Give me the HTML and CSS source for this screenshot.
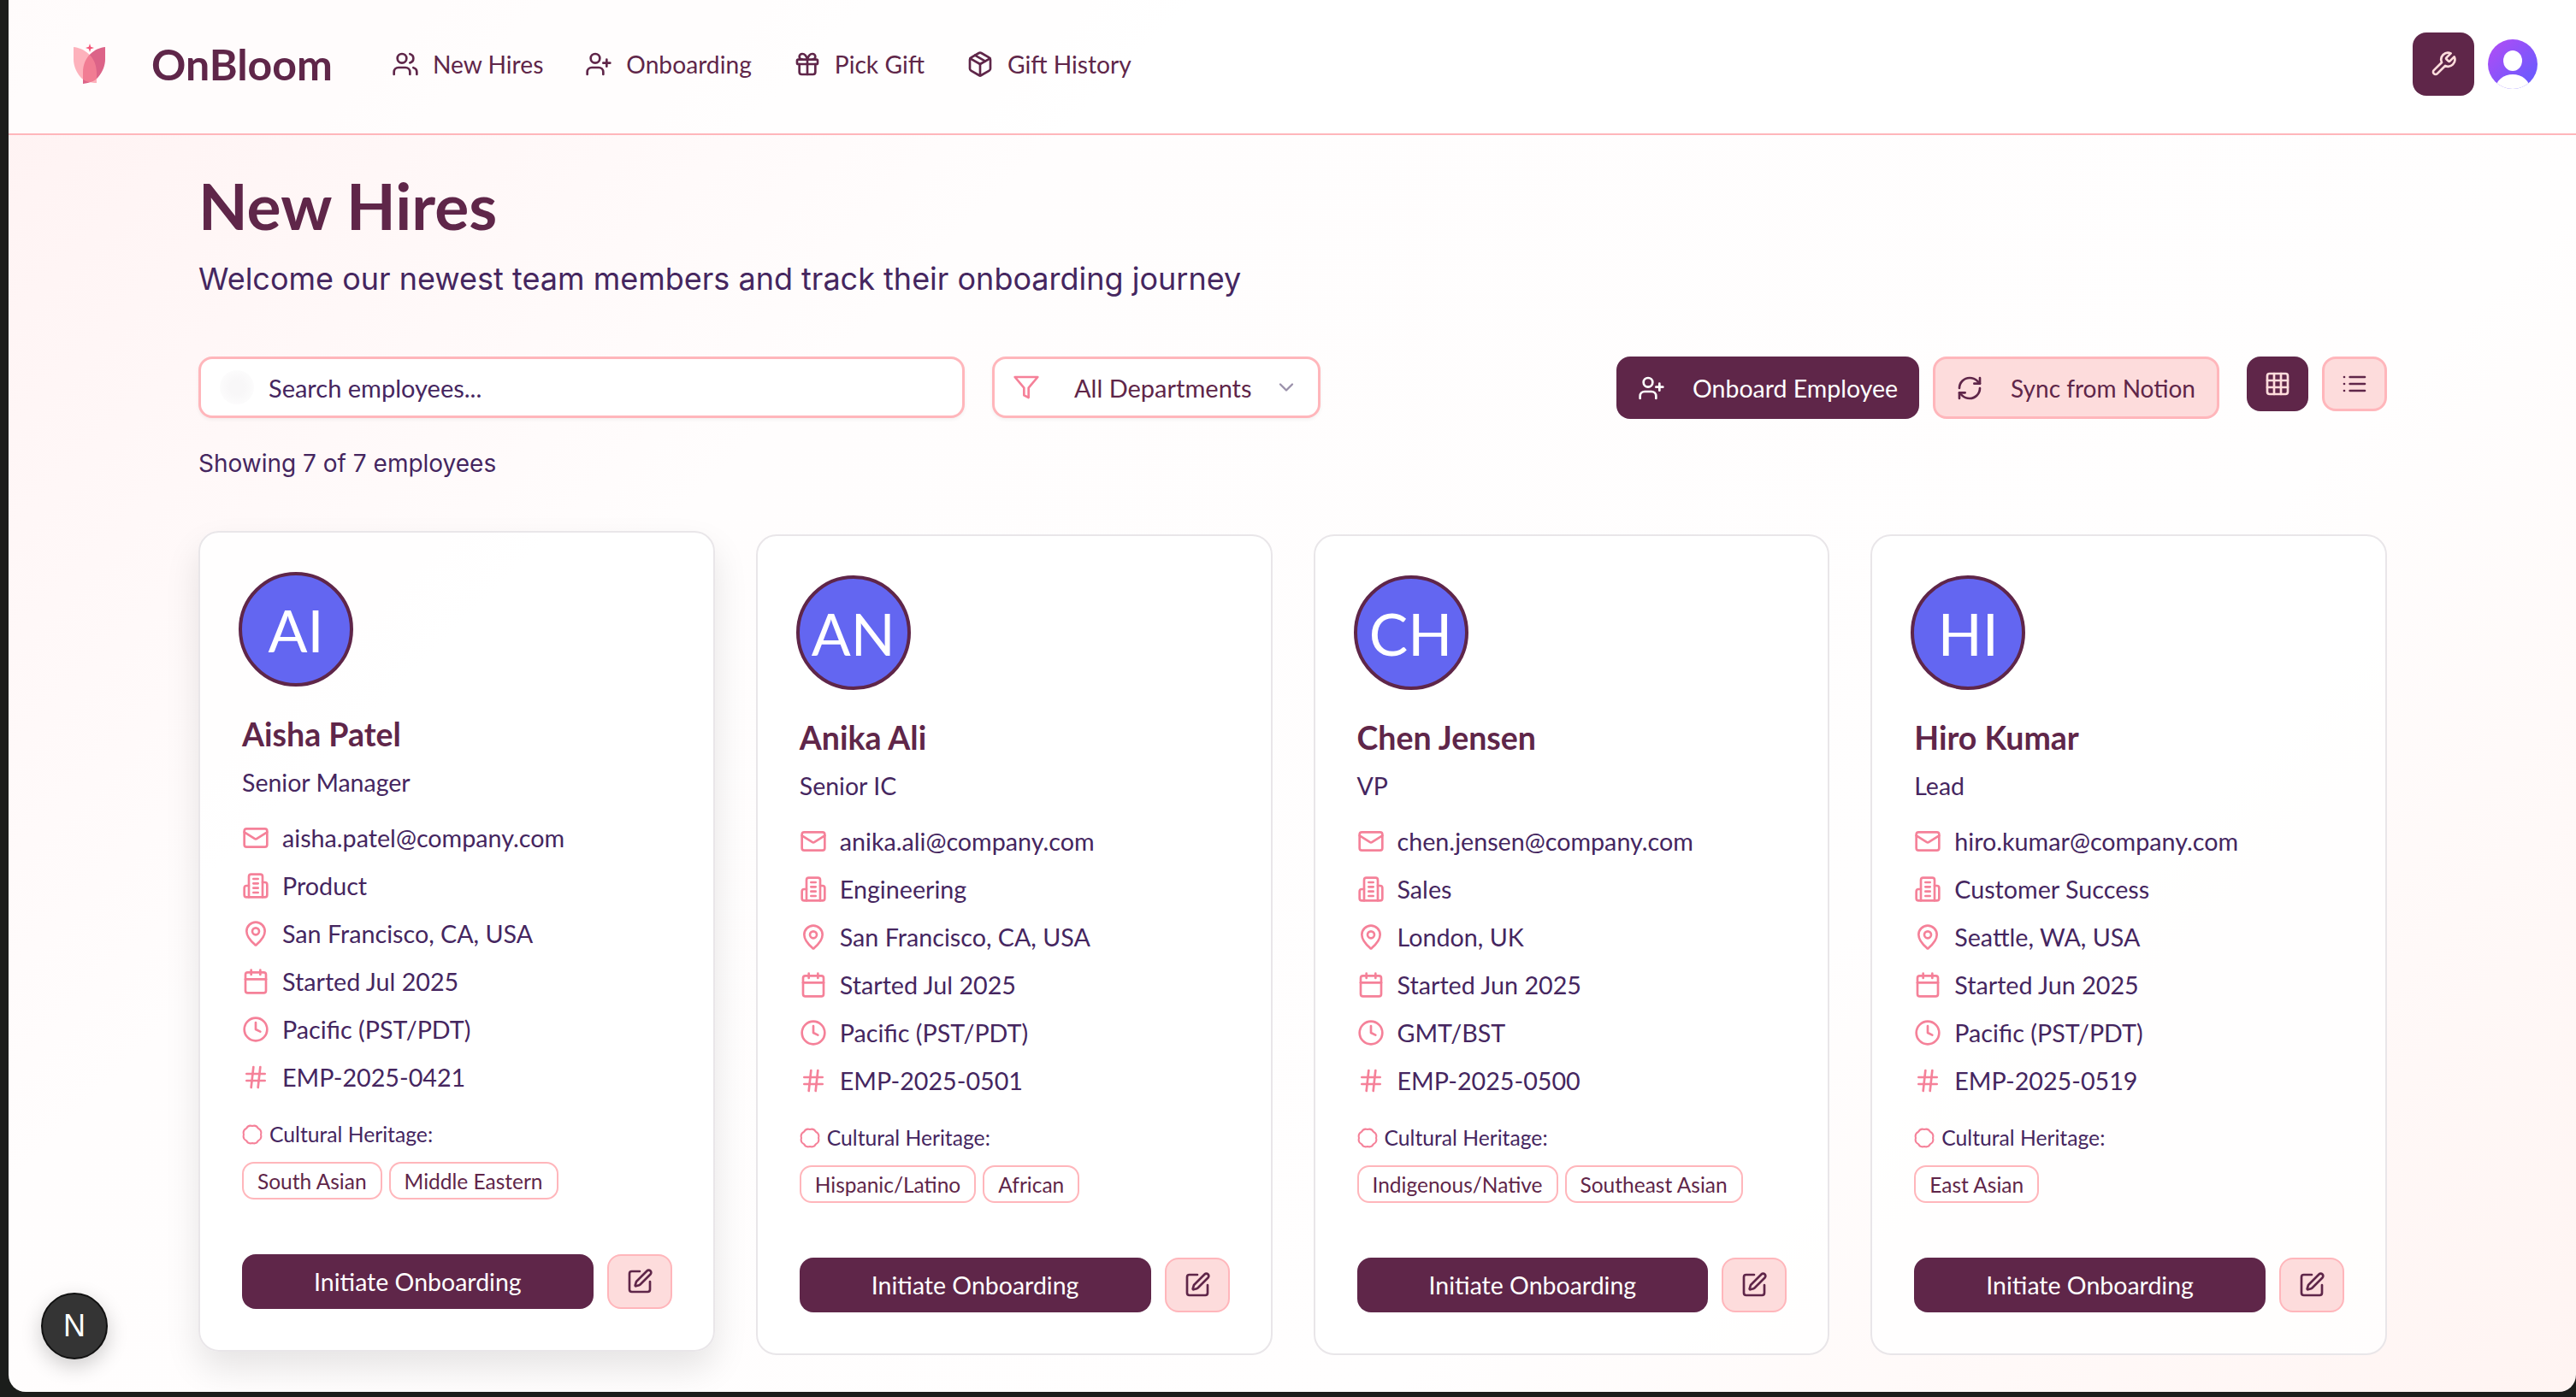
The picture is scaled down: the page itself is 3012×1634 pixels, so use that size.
FILE: index.html
```html
<!DOCTYPE html>
<html lang="en">
<head>
  <meta charset="UTF-8">
  <meta name="viewport" content="width=device-width, initial-scale=1.0">
  <title>OnBloom - New Hires</title>
  <link rel="stylesheet" href="styles.css">
</head>
<body>
  <!-- icon sprite -->
  <svg class="sprite" xmlns="http://www.w3.org/2000/svg">
    <symbol id="i-users" viewBox="0 0 24 24"><path d="M16 21v-2a4 4 0 0 0-4-4H6a4 4 0 0 0-4 4v2"/><path d="M16 3.128a4 4 0 0 1 0 7.744"/><path d="M22 21v-2a4 4 0 0 0-3-3.87"/><circle cx="9" cy="7" r="4"/></symbol>
    <symbol id="i-user-plus" viewBox="0 0 24 24"><path d="M16 21v-2a4 4 0 0 0-4-4H6a4 4 0 0 0-4 4v2"/><circle cx="9" cy="7" r="4"/><path d="M19 8v6"/><path d="M22 11h-6"/></symbol>
    <symbol id="i-gift" viewBox="0 0 24 24"><rect x="3" y="8" width="18" height="4" rx="1"/><path d="M12 8v13"/><path d="M19 12v7a2 2 0 0 1-2 2H7a2 2 0 0 1-2-2v-7"/><path d="M7.5 8a2.5 2.5 0 0 1 0-5A4.8 8 0 0 1 12 8a4.8 8 0 0 1 4.5-5 2.5 2.5 0 0 1 0 5"/></symbol>
    <symbol id="i-package" viewBox="0 0 24 24"><path d="M11 21.73a2 2 0 0 0 2 0l7-4A2 2 0 0 0 21 16V8a2 2 0 0 0-1-1.73l-7-4a2 2 0 0 0-2 0l-7 4A2 2 0 0 0 3 8v8a2 2 0 0 0 1 1.73z"/><path d="M12 22V12"/><path d="M3.29 7 12 12l8.71-5"/><path d="m7.5 4.27 9 5.15"/></symbol>
    <symbol id="i-wrench" viewBox="0 0 24 24"><path d="M14.7 6.3a1 1 0 0 0 0 1.4l1.6 1.6a1 1 0 0 0 1.4 0l3.77-3.77a6 6 0 0 1-7.94 7.94l-6.91 6.91a2.12 2.12 0 0 1-3-3l6.91-6.91a6 6 0 0 1 7.94-7.94l-3.76 3.76z"/></symbol>
    <symbol id="i-filter" viewBox="0 0 24 24"><polygon points="22 3 2 3 10 12.46 10 19 14 21 14 12.46 22 3"/></symbol>
    <symbol id="i-chevron" viewBox="0 0 24 24"><path d="m6 9 6 6 6-6"/></symbol>
    <symbol id="i-refresh" viewBox="0 0 24 24"><path d="M3 12a9 9 0 0 1 9-9 9.75 9.75 0 0 1 6.74 2.74L21 8"/><path d="M21 3v5h-5"/><path d="M21 12a9 9 0 0 1-9 9 9.75 9.75 0 0 1-6.74-2.74L3 16"/><path d="M8 16H3v5"/></symbol>
    <symbol id="i-grid" viewBox="0 0 24 24"><rect width="18" height="18" x="3" y="3" rx="2"/><path d="M3 9h18"/><path d="M3 15h18"/><path d="M9 3v18"/><path d="M15 3v18"/></symbol>
    <symbol id="i-list" viewBox="0 0 24 24"><path d="M3 12h.01"/><path d="M3 18h.01"/><path d="M3 6h.01"/><path d="M8 12h13"/><path d="M8 18h13"/><path d="M8 6h13"/></symbol>
    <symbol id="i-mail" viewBox="0 0 24 24"><rect width="20" height="16" x="2" y="4" rx="2"/><path d="m22 7-8.97 5.7a1.94 1.94 0 0 1-2.06 0L2 7"/></symbol>
    <symbol id="i-building" viewBox="0 0 24 24"><path d="M6 22V4a2 2 0 0 1 2-2h8a2 2 0 0 1 2 2v18Z"/><path d="M6 12H4a2 2 0 0 0-2 2v6a2 2 0 0 0 2 2h2"/><path d="M18 9h2a2 2 0 0 1 2 2v9a2 2 0 0 1-2 2h-2"/><path d="M10 6h4"/><path d="M10 10h4"/><path d="M10 14h4"/><path d="M10 18h4"/></symbol>
    <symbol id="i-pin" viewBox="0 0 24 24"><path d="M20 10c0 4.993-5.539 10.193-7.399 11.799a1 1 0 0 1-1.202 0C9.539 20.193 4 14.993 4 10a8 8 0 0 1 16 0"/><circle cx="12" cy="10" r="3"/></symbol>
    <symbol id="i-calendar" viewBox="0 0 24 24"><path d="M8 2v4"/><path d="M16 2v4"/><rect width="18" height="18" x="3" y="4" rx="2"/><path d="M3 10h18"/></symbol>
    <symbol id="i-clock" viewBox="0 0 24 24"><circle cx="12" cy="12" r="10"/><polyline points="12 6 12 12 16 14"/></symbol>
    <symbol id="i-hash" viewBox="0 0 24 24"><path d="M4 9h16"/><path d="M4 15h16"/><path d="M10 3 8 21"/><path d="M16 3l-2 18"/></symbol>
    <symbol id="i-scallop" viewBox="0 0 24 24"><path d="M22 12A6 6 0 0 1 19.07 19.07A6 6 0 0 1 12 22A6 6 0 0 1 4.93 19.07A6 6 0 0 1 2 12A6 6 0 0 1 4.93 4.93A6 6 0 0 1 12 2A6 6 0 0 1 19.07 4.93A6 6 0 0 1 22 12Z"/></symbol>
    <symbol id="i-edit" viewBox="0 0 24 24"><path d="M12 3H5a2 2 0 0 0-2 2v14a2 2 0 0 0 2 2h14a2 2 0 0 0 2-2v-7"/><path d="M18.375 2.625a1 1 0 0 1 3 3l-9.013 9.014a2 2 0 0 1-.853.505l-2.873.84a.5.5 0 0 1-.62-.62l.84-2.873a2 2 0 0 1 .506-.852z"/></symbol>
  </svg>

  <div class="app">
    <header class="topbar">
      <div class="brand">
        <svg class="logo" viewBox="0 0 39 48" xmlns="http://www.w3.org/2000/svg">
          <path d="M38 4C27 5 12 14 12 34V47C20 46 26 44 30 39C35 33 38 26 38 18Z" fill="#dc6388"/>
          <path d="M1 4C12 5 28 14 28 34V46C20 46 13 44 9 39C4 33 1 26 1 18Z" fill="#fc8a9a" fill-opacity=".65"/>
          <path d="M20 0l1.2 3.8 3.8 1.2-3.8 1.2L20 10l-1.2-3.8L15 5l3.8-1.2z" fill="#f4577a"/>
        </svg>
        <span class="brand-name">OnBloom</span>
      </div>
      <nav class="nav">
        <a class="nav-link"><svg class="icon"><use href="#i-users"/></svg>New Hires</a>
        <a class="nav-link"><svg class="icon"><use href="#i-user-plus"/></svg>Onboarding</a>
        <a class="nav-link"><svg class="icon"><use href="#i-gift"/></svg>Pick Gift</a>
        <a class="nav-link"><svg class="icon"><use href="#i-package"/></svg>Gift History</a>
      </nav>
      <div class="topbar-right">
        <button class="btn-tools"><svg class="icon"><use href="#i-wrench"/></svg></button>
        <div class="user-avatar"><span class="user-head"></span><span class="user-body"></span></div>
      </div>
    </header>

    <main class="content">
      <h1>New Hires</h1>
      <p class="lead">Welcome our newest team members and track their onboarding journey</p>

      <div class="toolbar">
        <div class="search"><span class="search-icon"></span><span class="placeholder">Search employees...</span></div>
        <div class="select">
          <svg class="icon icon-pink"><use href="#i-filter"/></svg>
          <span>All Departments</span>
          <svg class="icon chevron"><use href="#i-chevron"/></svg>
        </div>
        <div class="toolbar-actions">
          <button class="btn btn-dark"><svg class="icon"><use href="#i-user-plus"/></svg>Onboard Employee</button>
          <button class="btn btn-light"><svg class="icon"><use href="#i-refresh"/></svg>Sync from Notion</button>
          <div class="view-toggle">
            <button class="btn-view active"><svg class="icon"><use href="#i-grid"/></svg></button>
            <button class="btn-view"><svg class="icon"><use href="#i-list"/></svg></button>
          </div>
        </div>
      </div>

      <p class="count">Showing 7 of 7 employees</p>

      <div class="cards">
        <article class="card card-hover">
          <div class="avatar">AI</div>
          <h3>Aisha Patel</h3>
          <p class="role">Senior Manager</p>
          <ul class="facts">
            <li><svg class="icon"><use href="#i-mail"/></svg>aisha.patel@company.com</li>
            <li><svg class="icon"><use href="#i-building"/></svg>Product</li>
            <li><svg class="icon"><use href="#i-pin"/></svg>San Francisco, CA, USA</li>
            <li><svg class="icon"><use href="#i-calendar"/></svg>Started Jul 2025</li>
            <li><svg class="icon"><use href="#i-clock"/></svg>Pacific (PST/PDT)</li>
            <li><svg class="icon"><use href="#i-hash"/></svg>EMP-2025-0421</li>
          </ul>
          <div class="heritage"><svg class="icon"><use href="#i-scallop"/></svg>Cultural Heritage:</div>
          <div class="tags"><span class="tag">South Asian</span><span class="tag">Middle Eastern</span></div>
          <div class="card-actions">
            <button class="btn-initiate">Initiate Onboarding</button>
            <button class="btn-edit"><svg class="icon"><use href="#i-edit"/></svg></button>
          </div>
        </article>

        <article class="card">
          <div class="avatar">AN</div>
          <h3>Anika Ali</h3>
          <p class="role">Senior IC</p>
          <ul class="facts">
            <li><svg class="icon"><use href="#i-mail"/></svg>anika.ali@company.com</li>
            <li><svg class="icon"><use href="#i-building"/></svg>Engineering</li>
            <li><svg class="icon"><use href="#i-pin"/></svg>San Francisco, CA, USA</li>
            <li><svg class="icon"><use href="#i-calendar"/></svg>Started Jul 2025</li>
            <li><svg class="icon"><use href="#i-clock"/></svg>Pacific (PST/PDT)</li>
            <li><svg class="icon"><use href="#i-hash"/></svg>EMP-2025-0501</li>
          </ul>
          <div class="heritage"><svg class="icon"><use href="#i-scallop"/></svg>Cultural Heritage:</div>
          <div class="tags"><span class="tag">Hispanic/Latino</span><span class="tag">African</span></div>
          <div class="card-actions">
            <button class="btn-initiate">Initiate Onboarding</button>
            <button class="btn-edit"><svg class="icon"><use href="#i-edit"/></svg></button>
          </div>
        </article>

        <article class="card">
          <div class="avatar">CH</div>
          <h3>Chen Jensen</h3>
          <p class="role">VP</p>
          <ul class="facts">
            <li><svg class="icon"><use href="#i-mail"/></svg>chen.jensen@company.com</li>
            <li><svg class="icon"><use href="#i-building"/></svg>Sales</li>
            <li><svg class="icon"><use href="#i-pin"/></svg>London, UK</li>
            <li><svg class="icon"><use href="#i-calendar"/></svg>Started Jun 2025</li>
            <li><svg class="icon"><use href="#i-clock"/></svg>GMT/BST</li>
            <li><svg class="icon"><use href="#i-hash"/></svg>EMP-2025-0500</li>
          </ul>
          <div class="heritage"><svg class="icon"><use href="#i-scallop"/></svg>Cultural Heritage:</div>
          <div class="tags"><span class="tag">Indigenous/Native</span><span class="tag">Southeast Asian</span></div>
          <div class="card-actions">
            <button class="btn-initiate">Initiate Onboarding</button>
            <button class="btn-edit"><svg class="icon"><use href="#i-edit"/></svg></button>
          </div>
        </article>

        <article class="card">
          <div class="avatar">HI</div>
          <h3>Hiro Kumar</h3>
          <p class="role">Lead</p>
          <ul class="facts">
            <li><svg class="icon"><use href="#i-mail"/></svg>hiro.kumar@company.com</li>
            <li><svg class="icon"><use href="#i-building"/></svg>Customer Success</li>
            <li><svg class="icon"><use href="#i-pin"/></svg>Seattle, WA, USA</li>
            <li><svg class="icon"><use href="#i-calendar"/></svg>Started Jun 2025</li>
            <li><svg class="icon"><use href="#i-clock"/></svg>Pacific (PST/PDT)</li>
            <li><svg class="icon"><use href="#i-hash"/></svg>EMP-2025-0519</li>
          </ul>
          <div class="heritage"><svg class="icon"><use href="#i-scallop"/></svg>Cultural Heritage:</div>
          <div class="tags"><span class="tag">East Asian</span></div>
          <div class="card-actions">
            <button class="btn-initiate">Initiate Onboarding</button>
            <button class="btn-edit"><svg class="icon"><use href="#i-edit"/></svg></button>
          </div>
        </article>
      </div>
    </main>

    <div class="dev-badge">N</div>
  </div>
</body>
</html>
```

FILE: styles.css
```css
* {
  margin: 0;
  padding: 0;
  box-sizing: border-box;
}

html, body {
  height: 100%;
  overflow: hidden;
}

body {
  font-family: 'Lato', 'Noto Sans', sans-serif;
  background-color: #1b1d1b;
  color: #5f2649;
  padding: 0 0 6px 10px;
}

.sprite {
  display: none;
}

.icon {
  width: 32px;
  height: 32px;
  fill: none;
  stroke: currentColor;
  stroke-width: 2;
  stroke-linecap: round;
  stroke-linejoin: round;
  flex-shrink: 0;
}

button {
  font-family: inherit;
  border: none;
}

.app {
  position: relative;
  height: 100%;
  overflow: hidden;
  border-bottom-left-radius: 20px;
  border-bottom-right-radius: 20px;
  background: linear-gradient(135deg, #fff2f2 0%, #fffdfd 30%, #fffefe 70%, #fff4f2 100%);
}

/* top bar */
.topbar {
  height: 158px;
  display: flex;
  align-items: center;
  padding: 0 45px 7px 75px;
  background-color: rgba(255, 255, 255, 0.7);
  border-bottom: 2px solid #ffb6bb;
}

.brand {
  display: flex;
  align-items: center;
  gap: 53px;
}

.logo {
  width: 39px;
  height: 48px;
}

.brand-name {
  font-size: 50px;
  font-weight: 700;
  color: #5f2649;
}

.nav {
  display: flex;
  gap: 49px;
  margin-left: 69px;
}

.nav-link {
  display: flex;
  align-items: center;
  gap: 16px;
  font-size: 28.2px;
  color: #5f2649;
}

.topbar-right {
  margin-left: auto;
  display: flex;
  align-items: center;
  gap: 16px;
}

.btn-tools {
  width: 72px;
  height: 74px;
  border-radius: 16px;
  background-color: #5f2649;
  color: #ffdcdc;
  display: flex;
  align-items: center;
  justify-content: center;
}

.user-avatar {
  position: relative;
  width: 58px;
  height: 58px;
  border-radius: 50%;
  overflow: hidden;
  background: linear-gradient(135deg, #b44cf5, #5f5cff);
}

.user-head {
  position: absolute;
  left: 18px;
  top: 13px;
  width: 22px;
  height: 24px;
  border-radius: 50%;
  background-color: #fff;
}

.user-body {
  position: absolute;
  left: 9px;
  top: 41px;
  width: 40px;
  height: 34px;
  border-radius: 50%;
  background-color: #fff;
}

/* page */
.content {
  padding: 40px 221px 0 222px;
}

h1 {
  font-size: 75px;
  font-weight: 700;
  line-height: 84px;
  color: #5f2649;
}

.lead {
  font-family: 'Inter', sans-serif;
  font-size: 36px;
  line-height: 48px;
  margin-top: 20px;
  color: #45265f;
}

.toolbar {
  display: flex;
  align-items: flex-start;
  margin-top: 67px;
}

.search,
.select {
  height: 72px;
  border: 3px solid #ffb6bb;
  border-radius: 16px;
  background-color: #fff;
  display: flex;
  align-items: center;
  font-size: 29px;
  box-shadow: 0 2px 4px rgba(0, 0, 0, 0.05);
}

.search {
  width: 896px;
  padding-left: 22px;
  gap: 17px;
  color: #45265f;
}

.search-icon {
  width: 40px;
  height: 40px;
  border-radius: 50%;
  background: radial-gradient(circle, #f8f7f8 30%, #fff 100%);
}

.select {
  width: 384px;
  margin-left: 32px;
  padding-left: 21px;
  gap: 40px;
}

.icon-pink {
  color: #f58199;
}

.chevron {
  color: #9a90aa;
  width: 28px;
  height: 28px;
  margin-left: -14px;
}

.toolbar-actions {
  margin-left: auto;
  display: flex;
  align-items: flex-start;
  gap: 16px;
}

.btn {
  height: 73px;
  display: flex;
  align-items: center;
  gap: 32px;
  padding: 0 25px;
  border-radius: 16px;
  font-size: 28.5px;
}

.btn-dark {
  background-color: #5f2649;
  color: #fff;
}

.btn-light {
  background-color: #fddcdc;
  color: #5f2649;
  border: 3px solid #ffb6bb;
  font-size: 28px;
  padding: 0 25px 0 24px;
}

.view-toggle {
  display: flex;
  gap: 16px;
  margin-left: 16px;
}

.btn-view {
  width: 76px;
  height: 64px;
  border-radius: 16px;
  background-color: #fddcdc;
  color: #5f2649;
  border: 3px solid #ffb6bb;
  display: flex;
  align-items: center;
  justify-content: center;
}

.btn-view.active {
  width: 72px;
  background-color: #5f2649;
  color: #ffdcdc;
  border: none;
}

.count {
  font-family: 'Inter', sans-serif;
  font-size: 28px;
  line-height: 40px;
  margin-top: 32px;
  color: #45265f;
}

/* employee cards */
.cards {
  display: grid;
  grid-template-columns: repeat(4, 1fr);
  gap: 48px;
  margin-top: 63px;
}

.card {
  height: 960px;
  padding: 46px 48px 48px 49px;
  display: flex;
  flex-direction: column;
  background-color: rgba(255, 255, 255, 0.8);
  border: 2px solid #e9e6e9;
  border-radius: 24px;
}

.card-hover {
  transform: translateY(-4px);
  box-shadow: 0 20px 40px rgba(0, 0, 0, 0.1);
}

.avatar {
  width: 134px;
  height: 134px;
  margin-left: -4px;
  border-radius: 50%;
  border: 4px solid #5f2649;
  background-color: #6366f1;
  color: #fff;
  font-size: 68px;
  display: flex;
  align-items: center;
  justify-content: center;
}

h3 {
  font-size: 37.5px;
  font-weight: 700;
  line-height: 48px;
  margin-top: 32px;
  color: #5f2649;
}

.role {
  font-size: 28.5px;
  line-height: 40px;
  margin-top: 12px;
  color: #45265f;
}

.facts {
  list-style: none;
  margin-top: 17px;
}

.facts li {
  height: 56px;
  display: flex;
  align-items: center;
  gap: 15px;
  font-size: 28.7px;
  color: #45265f;
}

.facts .icon {
  color: #f58199;
}

.heritage {
  display: flex;
  align-items: center;
  gap: 8px;
  margin-top: 21px;
  font-size: 24.7px;
  line-height: 36px;
  color: #45265f;
}

.heritage .icon {
  width: 24px;
  height: 24px;
  color: #f58199;
}

.tags {
  display: flex;
  gap: 8px;
  margin-top: 14px;
}

.tag {
  height: 44px;
  padding: 0 16px;
  display: flex;
  align-items: center;
  font-size: 24.5px;
  color: #5f2649;
  background-color: #fff;
  border: 2px solid #ffb6bb;
  border-radius: 14px;
}

.card-actions {
  margin-top: auto;
  display: flex;
  gap: 16px;
}

.btn-initiate {
  flex: 1;
  height: 64px;
  border-radius: 16px;
  background-color: #5f2649;
  color: #fff;
  font-size: 28.5px;
}

.btn-edit {
  width: 76px;
  height: 64px;
  border-radius: 16px;
  background-color: #fddcdc;
  color: #5f2649;
  border: 2px solid #ffb6bb;
  display: flex;
  align-items: center;
  justify-content: center;
}

/* dev indicator */
.dev-badge {
  position: absolute;
  left: 38px;
  bottom: 38px;
  width: 78px;
  height: 78px;
  border-radius: 50%;
  background-color: #343434;
  border: 2px solid #111;
  color: #fff;
  font-family: 'Liberation Sans', sans-serif;
  font-size: 36px;
  display: flex;
  align-items: center;
  justify-content: center;
  box-shadow: 0 8px 24px rgba(0, 0, 0, 0.2);
}
```
